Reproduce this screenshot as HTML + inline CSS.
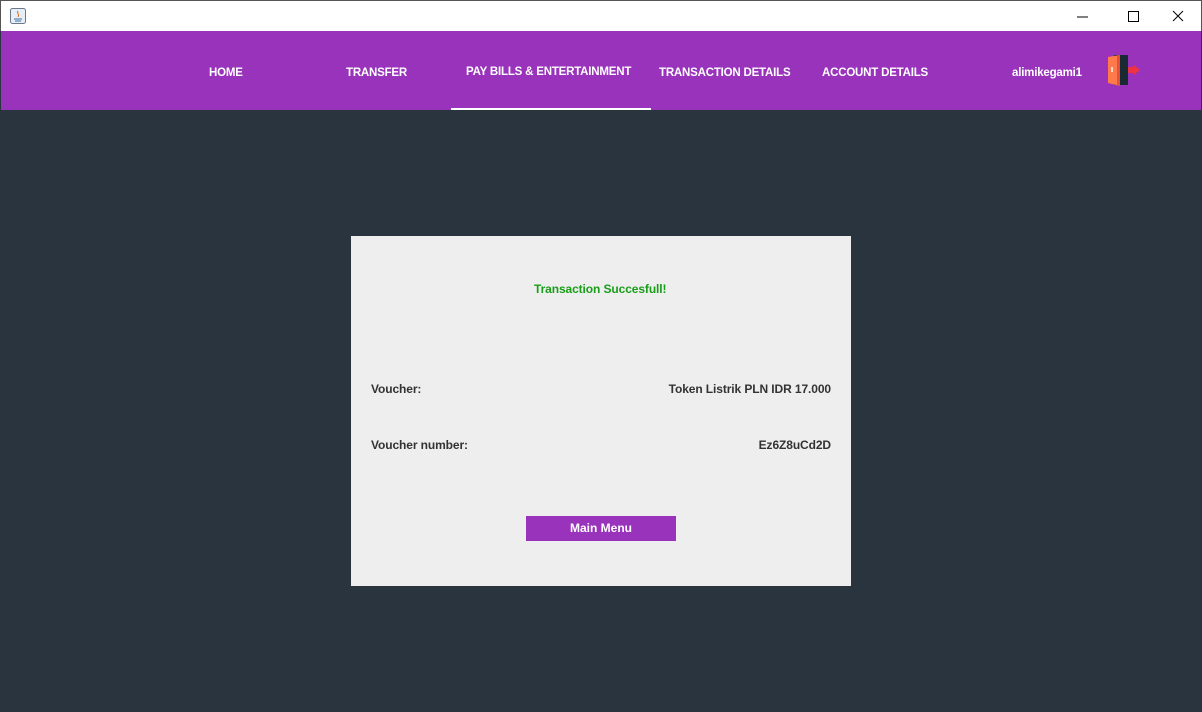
<!DOCTYPE html>
<html><head><meta charset="utf-8"><style>
*{margin:0;padding:0;box-sizing:border-box}
body{width:1202px;height:712px;overflow:hidden;background:#29343e;font-family:"Liberation Sans",sans-serif;position:relative}
.title{position:absolute;left:0;top:0;width:1202px;height:31px;background:#fff;border:1px solid #555;border-bottom:none}
.nav{position:absolute;left:1px;top:31px;width:1200px;height:79px;background:#9933bb}
.n{position:absolute;top:36px;color:#fff;font-weight:bold;font-size:11.5px;letter-spacing:-0.2px;white-space:nowrap}
.card{position:absolute;left:351px;top:236px;width:500px;height:350px;background:#eeeeee}
.t{position:absolute;font-size:12px;font-weight:bold;color:#333;white-space:nowrap;letter-spacing:-0.1px}
</style></head><body>
<div class="title">
<svg style="position:absolute;left:9px;top:7px" width="16" height="16"><rect x="0.5" y="0.5" width="15" height="15" rx="2" fill="#e8eef5" stroke="#6a7a8a"/><path d="M4 11h8M5 13h6" stroke="#3a6ea5"/><path d="M8 3c-2 2 2 3 0 6" stroke="#e07020" fill="none"/></svg>
<svg style="position:absolute;left:1076px;top:8px" width="110" height="16"><path d="M0 8h11" stroke="#000"/><rect x="51.5" y="2.5" width="10" height="10" fill="none" stroke="#000"/><path d="M96 2l10 10M106 2l-10 10" stroke="#000"/></svg>
</div>
<div class="nav">
<span class="n" style="left:208px">HOME</span>
<span class="n" style="left:345px">TRANSFER</span>
<span class="n" style="left:465px;top:35px">PAY BILLS &amp; ENTERTAINMENT</span>
<div style="position:absolute;left:450px;top:77px;width:200px;height:2px;background:#fff"></div>
<span class="n" style="left:658px">TRANSACTION DETAILS</span>
<span class="n" style="left:821px">ACCOUNT DETAILS</span>
<span class="n" style="left:1011px">alimikegami1</span>
<svg style="position:absolute;left:1106px;top:23px" width="36" height="34"><rect x="7" y="1" width="14" height="30" fill="#1a2a35"/><path d="M1 3l12-2v31l-12-3z" fill="#ff7a4a"/><path d="M13 1v31l-3-1V2z" fill="#e8503a"/><rect x="4" y="13" width="2" height="5" fill="#fff" opacity=".7"/><path d="M21 13h6v-2l6 5-6 5v-2h-6z" fill="#ee3344"/></svg>
</div>
<div class="card">
<span class="t" style="left:183px;top:46px;color:#1a9e1a">Transaction Succesfull!</span>
<span class="t" style="left:20px;top:146px">Voucher:</span>
<span class="t" style="right:20px;top:146px">Token Listrik PLN IDR 17.000</span>
<span class="t" style="left:20px;top:202px">Voucher number:</span>
<span class="t" style="right:20px;top:202px">Ez6Z8uCd2D</span>
<div style="position:absolute;left:175px;top:280px;width:150px;height:25px;background:#9933bb;color:#fff;font-weight:bold;font-size:12px;text-align:center;line-height:25px">Main Menu</div>
</div>
</body></html>
